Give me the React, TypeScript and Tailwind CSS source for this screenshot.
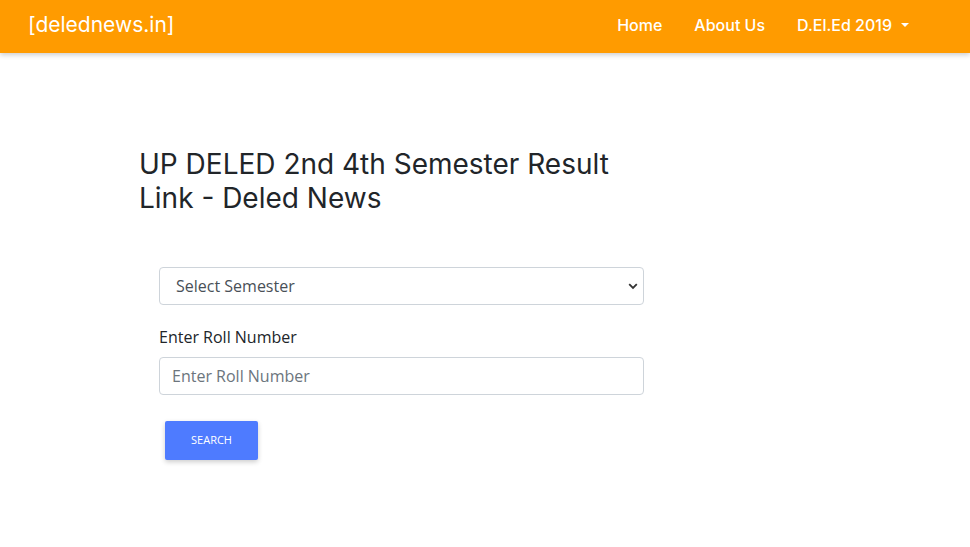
import React from 'react';

const Caret = () => (
  <svg width="10" height="6" viewBox="0 0 10 6" className="ml-[8px] mt-[1px]">
    <path d="M1 1 L5 5 L9 1 Z" fill="white" />
  </svg>
);

export default function App() {
  return (
    <div className="min-h-[547px] bg-white">
      <nav className="h-[53px] bg-[#ff9b00] shadow-[0_2px_5px_rgba(0,0,0,0.2)] flex items-center justify-between pl-[28px] pr-[60px] pb-[4px] relative z-10">
        <a href="#" className="text-white text-[21px] font-['Inter',sans-serif]">
          [delednews.in]
        </a>
        <ul className="flex items-center gap-[32px] text-white text-[16px] font-medium font-['Inter',sans-serif]">
          <li><a href="#">Home</a></li>
          <li><a href="#">About Us</a></li>
          <li className="flex items-center">
            <a href="#">D.El.Ed 2019</a>
            <Caret />
          </li>
        </ul>
      </nav>

      <main className="pl-[139px] pt-[94px]">
        <h1 className="w-[500px] text-[28px] leading-[34px] text-[#212529] font-['Inter',sans-serif]">
          UP DELED 2nd 4th Semester Result Link - Deled News
        </h1>

        <form className="mt-[52px] ml-[20px] w-[485px] font-['Open_Sans',sans-serif]">
          <div className="relative">
            <select className="w-full h-[38px] appearance-none rounded-[4px] border border-[#ced4da] bg-white pl-[16px] pr-8 text-[16px] text-[#495057]">
              <option>Select Semester</option>
              <option>2nd Semester</option>
              <option>4th Semester</option>
            </select>
            <svg width="10" height="7" viewBox="0 0 10 7" className="absolute right-[6px] top-[16px] pointer-events-none">
              <path d="M1.2 1.2 L5 5 L8.8 1.2" fill="none" stroke="#333" strokeWidth="1.8" />
            </svg>
          </div>

          <label className="block mt-[20px] text-[16px] text-[#212529]">Enter Roll Number</label>
          <input
            type="text"
            placeholder="Enter Roll Number"
            className="mt-[8px] w-full h-[38px] rounded-[4px] border border-[#ced4da] px-[12px] text-[16px] text-[#495057] placeholder:text-[#6c757d] outline-none"
          />

          <button
            type="button"
            className="mt-[26px] ml-[6px] w-[93px] h-[39px] rounded-[2px] bg-[#4e7bff] text-white text-[11px] shadow-[0_2px_5px_rgba(0,0,0,0.2)]"
          >
            SEARCH
          </button>
        </form>
      </main>
    </div>
  );
}
